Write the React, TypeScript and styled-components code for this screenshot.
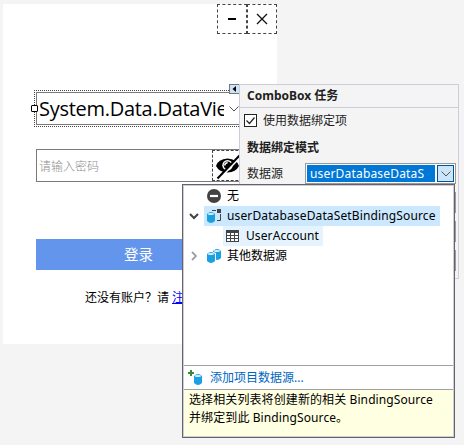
import React from 'react';
import styled, { createGlobalStyle } from 'styled-components';

const Global = createGlobalStyle`
  * { box-sizing: border-box; }
  html, body { margin: 0; background: #f4f4f4; overflow: hidden; }
  body { font: 12px/16px "Noto Sans", "Noto Sans CJK SC", sans-serif; color: #000; }
`;

const Designer = styled.main`
  position: relative;
  width: 464px;
  height: 445px;
  padding: 4px 0 0 3px;
  overflow: hidden;
  background: #f4f4f4;
`;

const Form = styled.section`
  display: flex;
  flex-direction: column;
  width: 274px;
  height: 340px;
  background: #fff;
`;

const TitleBar = styled.header`
  display: flex;
  justify-content: flex-end;
  height: 30px;
`;

const WindowButton = styled.div`
  width: 30px;
  height: 30px;
  border: 1px dashed #444;
  svg { display: block; width: 28px; height: 28px; }
`;

const Fields = styled.div`
  display: flex;
  flex-direction: column;
  width: 205px;
  margin: 58px 0 0 33px;
`;

const Combo = styled.div`
  position: relative;
  display: flex;
  align-items: center;
  gap: 4px;
  height: 33px;
  border: 1px solid #7a7a7a;
  outline: 1px dotted #444;
  outline-offset: 1px;
`;

const ComboText = styled.div`
  width: 187px;
  padding-left: 2px;
  overflow: hidden;
  white-space: nowrap;
  font-family: "Open Sans", sans-serif;
  font-size: 20px;
  line-height: 28px;
  letter-spacing: -0.28px;
`;

const SizeHandle = styled.i`
  position: absolute;
  left: -6px;
  top: 12px;
  width: 7px;
  height: 7px;
  border: 1px solid #000;
  border-radius: 1px;
  background: #fff;
`;

const SmartTag = styled.i`
  position: absolute;
  left: 192px;
  top: -9px;
  width: 11px;
  height: 10px;
  border: 1px solid #777;
  background: #cce4f7;
  svg { display: block; }
`;

const Arrow = styled.svg`
  flex: none;
  width: 12px;
  height: 8px;
  fill: none;
  stroke: #555;
`;

const Password = styled.div`
  display: flex;
  justify-content: space-between;
  height: 33px;
  margin-top: 24px;
  border: 1px solid #7a7a7a;
`;

const Placeholder = styled.span`
  padding: 8px 0 0 2px;
  color: #8f8f8f;
  font-family: "Noto Sans CJK SC", sans-serif;
  font-weight: 300;
`;

const EyeBox = styled.div`
  width: 31px;
  height: 31px;
  margin-right: -3px;
  border: 1px dashed #444;
  svg { display: block; }
`;

const Login = styled.div`
  height: 31px;
  margin-top: 57px;
  background: #6495ed;
  color: #fff;
  text-align: center;
  font-size: 14.5px;
  line-height: 31px;
`;

const Register = styled.p`
  margin: 20px 0 0 49px;
  white-space: nowrap;
  line-height: 16px;
  a { margin-left: 3px; color: #00f; text-decoration: underline; }
`;

const TaskPanel = styled.aside`
  position: absolute;
  left: 239px;
  top: 84px;
  width: 220px;
  height: 195px;
  border: 1px solid #ccccda;
  background: #f4f4f4;
  color: #1e1e1e;
`;

const TaskTitle = styled.h1`
  height: 23px;
  margin: 0;
  padding-left: 7px;
  border-bottom: 1px solid #ccccda;
  font-size: 12px;
  font-weight: 700;
  line-height: 22px;
`;

const CheckRow = styled.div`
  display: flex;
  align-items: center;
  gap: 6px;
  height: 25px;
  padding-left: 4px;
`;

const CheckBox = styled.span`
  width: 13px;
  height: 13px;
  border: 1px solid #222;
  background: #fff;
  svg { display: block; }
`;

const Group = styled.h2`
  margin: 7px 0 0;
  padding-left: 7px;
  font-size: 12px;
  font-weight: 700;
  line-height: 16px;
`;

const SourceRow = styled.div`
  display: flex;
  justify-content: space-between;
  height: 21px;
  margin: 7px 2px 0 7px;
  line-height: 21px;
`;

const Select = styled.div`
  display: flex;
  gap: 2px;
  width: 151px;
  height: 21px;
  padding: 1px;
  border: 1px solid #999;
  background: #fff;
`;

const Selected = styled.span`
  width: 128px;
  padding-left: 3px;
  overflow: hidden;
  background: #0078d7;
  color: #fff;
  line-height: 17px;
  letter-spacing: 0.18px;
`;

const SelectButton = styled.span`
  display: grid;
  place-items: center;
  width: 17px;
  border: 1px solid #005499;
  background: #cce4f7;
`;

const MoreSelect = styled.div`
  width: 151px;
  height: 21px;
  margin: 8px 2px 0 auto;
  border: 1px solid #999;
  background: #fff;
`;

const Dropdown = styled.section`
  position: absolute;
  left: 182px;
  top: 184px;
  display: flex;
  flex-direction: column;
  width: 273px;
  height: 254px;
  border: 1px solid #646469;
  background: #fff;
  box-shadow: inset 0 0 0 1px #ccccda;
`;

const Tree = styled.div`
  flex: 1;
  padding: 1px 1px 0;
`;

const TreeRow = styled.div<{ $indent?: number }>`
  display: flex;
  align-items: center;
  height: 20px;
  padding-left: ${p => p.$indent ?? 0}px;
`;

const Expander = styled.span`
  width: 20px;
  height: 20px;
  svg { display: block; }
`;

const Item = styled.div<{ $bg?: string; $width: number; $spacing?: number }>`
  display: flex;
  align-items: center;
  gap: 5px;
  width: ${p => p.$width}px;
  height: 20px;
  padding-left: 2px;
  background: ${p => p.$bg ?? 'transparent'};
  white-space: nowrap;
  letter-spacing: ${p => p.$spacing ?? 0}px;
  svg { flex: none; }
`;

const AddSource = styled.div`
  display: flex;
  align-items: center;
  gap: 6px;
  height: 24px;
  margin: 0 1px;
  padding-left: 4px;
  border-top: 1px solid #a0a0a0;
  color: #0066bf;
`;

const Hint = styled.p`
  height: 47px;
  margin: 0 1px 1px;
  padding: 1px 0 0 5px;
  border-top: 1px solid #a0a0a0;
  background: #ffffe1;
  line-height: 18px;
  white-space: nowrap;
`;

const HintLine = styled.span<{ $spacing: number }>`
  display: block;
  letter-spacing: ${p => p.$spacing}px;
`;

const Chevron = () => <Arrow viewBox="0 0 12 8"><path d="M1.5 1.5L6 6l4.5-4.5" /></Arrow>;

const Cylinder = ({ x, y, w = 8, h = 11 }: { x: number; y: number; w?: number; h?: number }) => (
  <g transform={`translate(${x} ${y})`}>
    <path d={`M0 2Q${w / 2}-2 ${w} 2V${h - 2}Q${w / 2} ${h + 2} 0 ${h - 2}Z`} fill="#1ba1e2" />
    <ellipse cx={w / 2} cy="2" rx={w / 2 - 0.8} ry="1.1" fill="#d8effa" />
  </g>
);

const NoneIcon = () => (
  <svg width="16" height="16"><circle cx="8" cy="8" r="7" fill="#424242" /><path d="M4 8h8" stroke="#fff" strokeWidth="2.2" /></svg>
);
const BindingIcon = () => (
  <svg width="16" height="16">
    <Cylinder x={1} y={4} h={11} />
    <path d="M6 2.5h4M14.5 6v6.5H11" fill="none" stroke="#424242" />
    <path d="M11 1h4v4h-4z" fill="#424242" />
  </svg>
);
const TableIcon = () => (
  <svg width="16" height="16">
    <path d="M1 2h13v12H1z" fill="#424242" />
    <path d="M2 5h3v2H2zm4 0h3v2H6zm4 0h3v2h-3zM2 8h3v2H2zm4 0h3v2H6zm4 0h3v2h-3zM2 11h3v2H2zm4 0h3v2H6zm4 0h3v2h-3z" fill="#fff" />
  </svg>
);
const OtherIcon = () => (
  <svg width="16" height="16"><Cylinder x={7} y={1} /><path d="M0 5Q5 2 10 5v8H0z" fill="#fff" /><Cylinder x={1} y={4} /></svg>
);
const AddIcon = () => (
  <svg width="16" height="16"><Cylinder x={6} y={4} h={11} /><path d="M3 0v7M0 3h7" stroke="#fff" strokeWidth="3.5" /><path d="M3 0v6M0 3h6" stroke="#388a34" strokeWidth="2" /></svg>
);

export default function App() {
  return (
    <>
      <Global />
      <Designer>
        <Form>
          <TitleBar>
            <WindowButton><svg><path d="M10 14h8" stroke="#000" strokeWidth="2" /></svg></WindowButton>
            <WindowButton><svg><path d="M9 9l10 10M19 9L9 19" stroke="#111" strokeWidth="1.3" /></svg></WindowButton>
          </TitleBar>
          <Fields>
            <Combo>
              <ComboText>System.Data.DataView</ComboText>
              <Chevron />
              <SizeHandle />
              <SmartTag><svg width="9" height="8"><path d="M6 1v6L2.5 4z" fill="#000" /></svg></SmartTag>
            </Combo>
            <Password>
              <Placeholder>请输入密码</Placeholder>
              <EyeBox>
                <svg width="29" height="29">
                  <path d="M3 15Q5 8 14.5 7.5Q24 8 26 15Q23 21 14.5 21.5Q6 21 3 15Z" fill="#000" />
                  <circle cx="14.5" cy="14.3" r="5.2" fill="#fff" />
                  <circle cx="14.5" cy="14.3" r="3.7" fill="#000" />
                  <path d="M11.8 14.5a2.8 2.8 0 0 1 2.8-2.8" fill="none" stroke="#fff" strokeWidth="1.5" />
                  <path d="M6 28L28 5" stroke="#fff" strokeWidth="2.2" />
                  <path d="M4.5 27.5L26.5 4.5" stroke="#000" strokeWidth="2" />
                </svg>
              </EyeBox>
            </Password>
            <Login>登录</Login>
            <Register>还没有账户？请<a>注册</a></Register>
          </Fields>
        </Form>

        <TaskPanel>
          <TaskTitle>ComboBox 任务</TaskTitle>
          <CheckRow>
            <CheckBox><svg width="11" height="11"><path d="M1.5 5.5l3 3 5-6" fill="none" stroke="#222" strokeWidth="1.2" /></svg></CheckBox>
            使用数据绑定项
          </CheckRow>
          <Group>数据绑定模式</Group>
          <SourceRow>
            数据源
            <Select><Selected>userDatabaseDataS</Selected><SelectButton><Chevron /></SelectButton></Select>
          </SourceRow>
          <MoreSelect /><MoreSelect /><MoreSelect />
        </TaskPanel>

        <Dropdown>
          <Tree>
            <TreeRow $indent={20}><Item $width={60}><NoneIcon />无</Item></TreeRow>
            <TreeRow>
              <Expander><svg width="20" height="20"><path d="M6 8l4 4 4-4" fill="none" stroke="#424242" strokeWidth="2" /></svg></Expander>
              <Item $width={236} $bg="#cce8ff" $spacing={0.13}><BindingIcon />userDatabaseDataSetBindingSource</Item>
            </TreeRow>
            <TreeRow $indent={39}><Item $width={100} $bg="#e5f3ff" $spacing={0.1}><TableIcon />UserAccount</Item></TreeRow>
            <TreeRow>
              <Expander><svg width="20" height="20"><path d="M8 6l4 4-4 4" fill="none" stroke="#a0a0a0" strokeWidth="1.8" /></svg></Expander>
              <Item $width={100}><OtherIcon />其他数据源</Item>
            </TreeRow>
          </Tree>
          <AddSource><AddIcon />添加项目数据源...</AddSource>
          <Hint>
            <HintLine $spacing={0.1}>选择相关列表将创建新的相关 BindingSource</HintLine>
            <HintLine $spacing={0.1}>并绑定到此 BindingSource。</HintLine>
          </Hint>
        </Dropdown>
      </Designer>
    </>
  );
}
